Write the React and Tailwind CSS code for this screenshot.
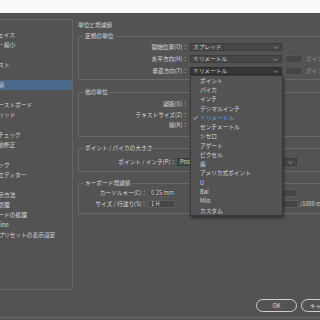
import React from "react";

const nav = [
  "一般", "インターフェイス", "表示の拡大・縮小", "テキスト", "高度なテキスト", "組版",
  "単位と増減値", "グリッド", "ガイドとペーストボード", "フレームグリッド", "辞書",
  "自動スペルチェック", "スペルの自動修正", "注釈", "変更のトラック", "ストーリーエディター",
  "表示画質", "ブラック表示方法", "ファイルの管理", "クリップボードの処理", "Publish Online",
  "フォントのプリセットの表示設定",
];

const units = [
  "ポイント", "パイカ", "インチ", "デシマルインチ", "ミリメートル", "センチメートル", "シセロ",
  "アゲート", "ピクセル", "歯", "アメリカ式ポイント", "U", "Bai", "Mils", "カスタム",
];

function Chevron() {
  return (
    <svg width="5" height="3" viewBox="0 0 5 3" className="ml-auto mr-[3px] shrink-0">
      <path d="M0.5 0.5 L2.5 2.5 L4.5 0.5" fill="none" stroke="#a0a0a0" strokeWidth="0.8" />
    </svg>
  );
}

function Select({ value, open, className }) {
  return (
    <div
      className={`flex items-center h-[8px] pl-[2px] border shrink-0 whitespace-nowrap overflow-hidden ${
        open ? "bg-[#363636] border-[#2e2e2e]" : "bg-[#464646] border-[#3c3c3c]"
      } ${className}`}
    >
      <span>{value}</span>
      <Chevron />
    </div>
  );
}

function Input({ value, className }) {
  return (
    <div className={`flex items-center h-[8px] pl-[2px] border bg-[#464646] border-[#5c5c5c] shrink-0 ${className}`}>
      {value}
    </div>
  );
}

function Group({ title, className, children }) {
  return (
    <fieldset className={`border border-[#686868] ${className}`}>
      <legend className="ml-[5px] px-[1px] leading-[8px]">{title}</legend>
      {children}
    </fieldset>
  );
}

function Row({ label, w, children }) {
  return (
    <div className="flex items-center h-[8px] whitespace-nowrap">
      <span className={`${w} text-right shrink-0`}>{label}</span>
      {children}
    </div>
  );
}

export default function App() {
  return (
    <div className="relative w-[320px] h-[320px] overflow-hidden bg-[#535353] text-[#dadada] text-[5.7px] leading-none font-['Noto_Sans_CJK_JP','Noto_Sans',sans-serif] flex flex-col">
      <div className="h-[13px] bg-[#fafafa] shrink-0" />

      <div className="flex pt-[6px] shrink-0">
        <div className="ml-[-40px] w-[113px] h-[271px] shrink-0 border border-[#646464]">
          {nav.map((n, i) => (
            <div
              key={i}
              className={`h-[10px] leading-[10px] pl-[9px] whitespace-nowrap ${i === 6 ? "bg-[#4a6a8b]" : ""}`}
            >
              {n}
            </div>
          ))}
        </div>

        <div className="ml-[5px] w-[260px] shrink-0 pt-[1px]">
          <div className="h-[10px] leading-[10px] mb-[2px]">単位と増減値</div>

          <Group title="定規の単位">
            <div className="flex flex-col gap-[4px] pt-[3px] pb-[4px]">
              <Row label="開始位置(O)：" w="w-[109px]">
                <Select value="スプレッド" className="ml-[2px] w-[92px]" />
              </Row>
              <Row label="水平方向(H)：" w="w-[109px]">
                <Select value="ミリメートル" className="ml-[2px] w-[92px]" />
                <Input className="ml-[3px] w-[18px] bg-[#4e4e4e] border-[#575757]" />
                <span className="ml-[3px] text-[#8e8e8e]">ポイント</span>
              </Row>
              <Row label="垂直方向(T)：" w="w-[109px]">
                <Select value="ミリメートル" open className="ml-[2px] w-[92px]" />
                <Input className="ml-[3px] w-[18px] bg-[#4e4e4e] border-[#575757]" />
                <span className="ml-[3px] text-[#8e8e8e]">ポイント</span>
              </Row>
            </div>
          </Group>

          <Group title="他の単位" className="mt-[8px]">
            <div className="flex flex-col gap-[2.5px] pt-[4px] pb-[7px]">
              <Row label="組版(G)：" w="w-[109px]">
                <Select value="ポイント" className="ml-[2px] w-[92px]" />
              </Row>
              <Row label="テキストサイズ(Z)：" w="w-[109px]">
                <Select value="ポイント" className="ml-[2px] w-[92px]" />
              </Row>
              <Row label="線(K)：" w="w-[109px]">
                <Select value="ポイント" className="ml-[2px] w-[92px]" />
              </Row>
            </div>
          </Group>

          <Group title="ポイント / パイカの大きさ" className="mt-[7px]">
            <div className="flex flex-col pt-[6px] pb-[5px]">
              <Row label="ポイント / インチ(P)：" w="w-[97px]">
                <Select value="PostScript (72 pt/インチ)" className="ml-[1px] w-[120px]" />
              </Row>
            </div>
          </Group>

          <Group title="キーボード増減値" className="mt-[7px]">
            <div className="flex flex-col gap-[3px] pt-[2px] pb-[5px]">
              <Row label="カーソルキー(C)：" w="w-[68px]">
                <Input value="0.25 mm" className="ml-[1px] w-[27px]" />
                <span className="w-[81px] text-right shrink-0">ベースライン(B)：</span>
                <Input value="2 pt" className="ml-[2px] w-[40px] pl-[3px]" />
              </Row>
              <Row label="サイズ / 行送り(S)：" w="w-[68px]">
                <Input value="1 H" className="ml-[1px] w-[27px]" />
                <span className="w-[81px] text-right shrink-0">トラッキング(K)：</span>
                <Input value="20" className="ml-[2px] w-[40px] pl-[3px]" />
                <span className="ml-[2px]">/1000 em</span>
              </Row>
            </div>
          </Group>
        </div>
      </div>

      <div className="flex gap-[4px] pl-[256px] mt-[9px] h-[13px] shrink-0">
        <div className="w-[41px] h-[13px] shrink-0 rounded-full border-[1.5px] border-[#cfcfcf] flex items-center justify-center">
          OK
        </div>
        <div className="w-[46px] h-[13px] shrink-0 rounded-full border-[1.5px] border-[#cfcfcf] flex items-center justify-center">
          キャンセル
        </div>
      </div>
      <div className="mt-[5px] h-[1px] bg-[#6c6c6c] shrink-0" />

      <div className="absolute left-[190px] top-[75px] w-[93px] bg-[#535353] border border-[#3a3a3a] shadow-[1px_2px_3px_rgba(0,0,0,0.45)]">
        {units.map((u, i) => (
          <div key={i} className="flex items-center h-[9.27px] pl-[2px] whitespace-nowrap">
            <span className="w-[7px] shrink-0 flex items-center">
              {i === 4 && (
                <svg width="5" height="4" viewBox="0 0 5 4">
                  <path d="M0.4 2 L1.8 3.4 L4.6 0.4" fill="none" stroke="#dcdcdc" strokeWidth="0.8" />
                </svg>
              )}
            </span>
            <span className={i === 4 ? "text-[#58a2ee]" : ""}>{u}</span>
          </div>
        ))}
      </div>
    </div>
  );
}
